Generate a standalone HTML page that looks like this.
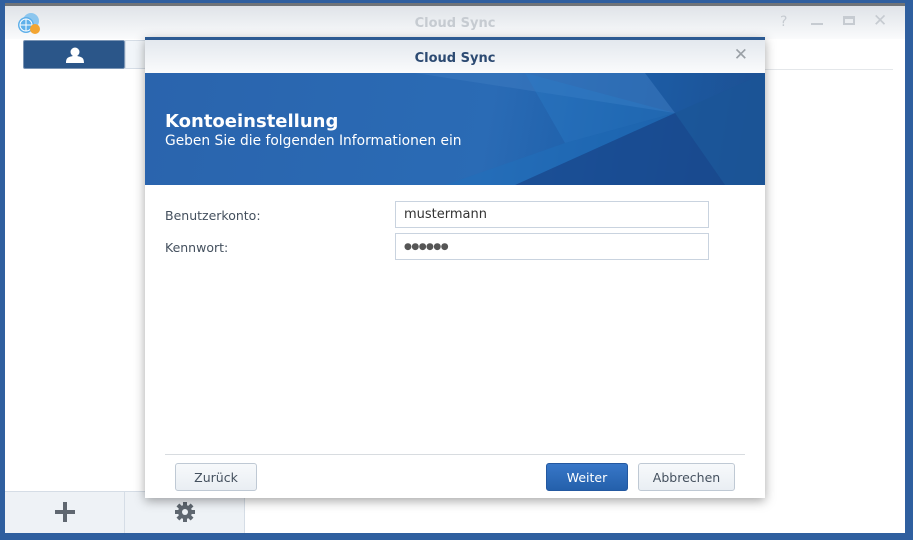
<!DOCTYPE html>
<html><head><style>
*{margin:0;padding:0;box-sizing:border-box}
body{width:913px;height:540px;background:#2f5f9f;font-family:"DejaVu Sans","Liberation Sans",sans-serif;position:relative;overflow:hidden}
.win{position:absolute;left:5px;top:3px;width:900px;height:530px;background:#fff;border-top:3px solid #707478}
.tb{height:33px;background:linear-gradient(#dfe3e8,#fafbfc);position:relative}
.tb .t{position:absolute;left:0;right:0;top:10px;text-align:center;font-size:13px;font-weight:bold;color:#c6cbd1}
.abs{position:absolute}
.dlg{position:absolute;left:145px;top:37px;width:620px;height:461px;background:#fff;border-top:3px solid #2c5a92;box-shadow:0 3px 10px rgba(0,0,0,.35)}
.dh{height:33px;background:linear-gradient(#e3e8ee,#fafbfc);text-align:center;font-size:13px;font-weight:bold;color:#2c4a72;padding-top:11px;position:relative}
.ban{height:112px;background:linear-gradient(100deg,#2a64ad 0%,#2a6bb5 55%,#1c5ea8 75%,#1d4f91 100%);position:relative;overflow:hidden;color:#fff}
.lbl{position:absolute;font-size:12.5px;color:#44505e}
.inp{position:absolute;left:250px;width:314px;height:27px;border:1px solid #c9d3df;font-size:13px;color:#333;padding:5px 8px}
.btn{position:absolute;top:423px;height:28px;border:1px solid #bfc9d4;border-radius:3px;background:linear-gradient(#f7f9fb,#e9eef3);font-size:12.5px;color:#44505e;text-align:center;padding-top:6px}
</style></head><body>
<div class="win">
 <div class="tb"><div class="t">Cloud Sync</div>
  <svg class="abs" style="left:12px;top:6px" width="26" height="24" viewBox="0 0 26 24"><circle cx="14" cy="9" r="8" fill="#8cc6ee"/><circle cx="9" cy="13" r="8" fill="#5fb0ea"/><circle cx="9" cy="13" r="6" fill="none" stroke="#fff" stroke-width="1"/><path d="M3 13h12M9 7v12" stroke="#fff" stroke-width="1"/><circle cx="18" cy="17" r="5" fill="#f3a531"/></svg>
  <div class="abs" style="left:775px;top:8px;font-size:14px;color:#c6cbd1">?</div>
  <div class="abs" style="left:806px;top:17px;width:12px;height:2px;background:#c6cbd1"></div>
  <div class="abs" style="left:838px;top:10px;width:12px;height:9px;border:2px solid #c6cbd1;border-top-width:3px"></div>
  <div class="abs" style="left:868px;top:5px;font-size:17px;color:#c6cbd1">✕</div>
 </div>
 <div class="abs" style="left:18px;top:34px;width:102px;height:29px;background:#2b5689;border:1px solid #7a94b4;border-radius:2px">
  <svg style="position:absolute;left:42px;top:6px" width="18" height="16" viewBox="0 0 18 16"><circle cx="9" cy="5" r="4.5" fill="#fff"/><path d="M0 16c0-6 3-6 7-7h4c4 1 7 1 7 7z" fill="#fff"/></svg>
 </div>
 <div class="abs" style="left:120px;top:34px;width:25px;height:29px;background:#f1f5f9;border:1px solid #d5dde6"></div>
 <div class="abs" style="left:760px;top:63px;width:128px;height:1px;background:#e4e7ea"></div>
 <div class="abs" style="left:0;top:485px;width:240px;height:42px;background:#eef2f6;border-top:1px solid #d5dde6"></div>
 <div class="abs" style="left:119px;top:485px;width:1px;height:42px;background:#d5dde6"></div>
 <div class="abs" style="left:239px;top:485px;width:1px;height:42px;background:#d5dde6"></div>
 <div class="abs" style="left:50px;top:504px;width:20px;height:4px;background:#5f6770"></div>
 <div class="abs" style="left:58px;top:496px;width:4px;height:20px;background:#5f6770"></div>
 <svg class="abs" style="left:170px;top:496px" width="20" height="20" viewBox="0 0 20 20"><g fill="#5f6770"><circle cx="10" cy="10" r="7"/><rect x="8" y="0" width="4" height="20"/><rect x="8" y="0" width="4" height="20" transform="rotate(45 10 10)"/><rect x="8" y="0" width="4" height="20" transform="rotate(90 10 10)"/><rect x="8" y="0" width="4" height="20" transform="rotate(135 10 10)"/></g><circle cx="10" cy="10" r="3" fill="#eef2f6"/></svg>
</div>
<div class="dlg">
 <div class="dh">Cloud Sync<span style="position:absolute;right:17px;top:5px;font-size:17px;color:#9aa0a6;font-weight:normal">✕</span></div>
 <div class="ban">
  <svg class="abs" style="left:0;top:0" width="620" height="112" viewBox="0 0 620 112"><polygon points="270,0 500,0 530,40" fill="#3a78be" opacity=".6"/><polygon points="530,40 620,0 620,112 580,112" fill="#1b5597" opacity=".7"/><polygon points="530,40 580,112 370,112" fill="#18468a" opacity=".7"/><polygon points="530,40 370,112 300,112 420,70" fill="#2070bb" opacity=".5"/><polygon points="380,0 530,40 420,70" fill="#2b7cc8" opacity=".4"/></svg>
  <div class="abs" style="left:20px;top:38px;font-size:18px;font-weight:bold">Kontoeinstellung</div>
  <div class="abs" style="left:20px;top:60px;font-size:13.8px">Geben Sie die folgenden Informationen ein</div>
 </div>
 <div class="lbl" style="left:20px;top:168px">Benutzerkonto:</div>
 <div class="lbl" style="left:20px;top:200px">Kennwort:</div>
 <div class="inp" style="top:161px">mustermann</div>
 <div class="inp" style="top:193px;font-size:9px;padding-top:8px;letter-spacing:-.5px;color:#555">●●●●●●</div>
 <div class="abs" style="left:20px;top:414px;width:580px;height:1px;background:#d8dce0"></div>
 <div class="btn" style="left:30px;width:82px">Zurück</div>
 <div class="btn" style="left:401px;width:82px;background:linear-gradient(#3877c8,#2460ab);border-color:#2358a0;color:#fff">Weiter</div>
 <div class="btn" style="left:493px;width:97px">Abbrechen</div>
</div>
</body></html>
